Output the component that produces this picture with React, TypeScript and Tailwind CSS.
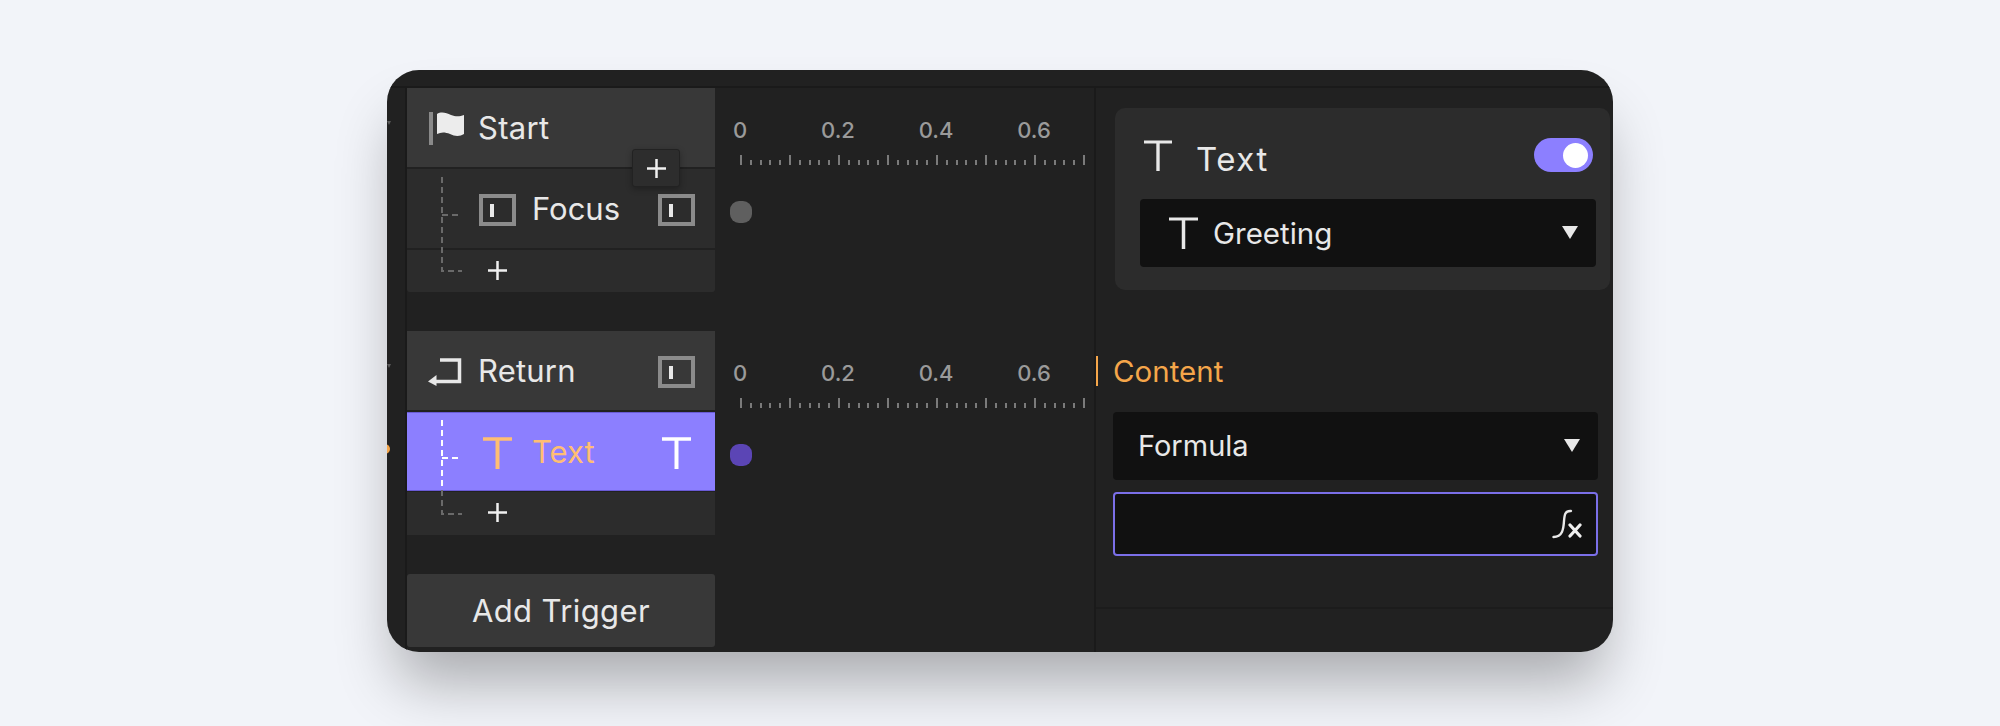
import React from 'react';

const FONT = "font-['Inter','Liberation_Sans',sans-serif]";

const FlagIcon = () => (
  <svg width="36" height="34" viewBox="0 0 36 34" className="shrink-0">
    <rect x="0" y="0" width="4" height="33" fill="#8a8a8a" />
    <path d="M8 2 C12 -0.5 17 0.5 22 3 C27 5 31 4.5 35 3 L35 22 C31 24.5 26 24.5 21 22 C16 20 12 20 8 22 Z" fill="#ececec" />
  </svg>
);

const ReturnIcon = () => (
  <svg width="34" height="28" viewBox="0 0 34 28" className="shrink-0">
    <path d="M12 2 H31.5 V23.5 H6" fill="none" stroke="#e8e8e8" strokeWidth="3.5" />
    <path d="M0 23.5 L8.5 17 V28 Z" fill="#e8e8e8" />
  </svg>
);

const FocusIcon = () => (
  <svg width="37" height="32" viewBox="0 0 37 32" className="shrink-0">
    <rect x="2" y="2" width="33" height="28" fill="none" stroke="#8b8b8b" strokeWidth="4" />
    <rect x="11" y="10" width="4" height="13" fill="#e8e8e8" />
  </svg>
);

const TIcon = ({ color = '#e8e8e8', w = 29, h = 32, bold }: { color?: string; w?: number; h?: number; bold?: boolean }) => (
  <svg width={w} height={h} viewBox="0 0 29 32" className="shrink-0">
    <path d="M0 2 H29" fill="none" stroke={color} strokeWidth={bold ? 3.5 : 3} />
    <path d="M14.5 2 V32" fill="none" stroke={color} strokeWidth={bold ? 4 : 3.5} />
  </svg>
);

const Plus = ({ size = 19 }: { size?: number }) => (
  <svg width={size} height={size} viewBox="0 0 19 19" className="shrink-0">
    <path d="M0 9.5 H19 M9.5 0 V19" fill="none" stroke="#f0f0f0" strokeWidth="2.5" />
  </svg>
);

const Caret = () => (
  <svg width="16" height="14" viewBox="0 0 16 14" className="shrink-0">
    <path d="M0 0 H16 L8 13 Z" fill="#e8e8e8" />
  </svg>
);

const FxIcon = () => (
  <svg width="30" height="30" viewBox="0 0 30 30" className="shrink-0">
    <path d="M19 2 C13 1.5 12.5 6 12 12 C11.5 20 10.5 28 1.5 28" fill="none" stroke="#e8e8e8" strokeWidth="2.4" strokeLinecap="round" />
    <path d="M18 16 L28 27 M28 16 L18 27" fill="none" stroke="#f0f0f0" strokeWidth="3.2" strokeLinecap="round" />
  </svg>
);

// dashed tree lines beside the child rows
const Tree = ({ active }: { active?: boolean }) => (
  <svg width="24" height="96" viewBox="0 0 24 96" className="absolute top-[89px] left-[33px]">
    <path d="M2 0 V67 M2 38 H22" fill="none" stroke={active ? '#ffffff' : '#6a6a6a'} strokeWidth="2" strokeDasharray="6 4" />
    <path d="M2 70 V94 H22" fill="none" stroke="#6a6a6a" strokeWidth="2" strokeDasharray="6 4" />
  </svg>
);

const EdgeMark = ({ className }: { className: string }) => (
  <svg width="4" height="4" viewBox="0 0 4 4" className={`absolute left-0 ${className}`}>
    <path d="M0 0 H4 L2 4 Z" fill="#5a5a5a" />
  </svg>
);

const Ruler = ({ dot }: { dot: string }) => (
  <div className="h-[243px] shrink-0 pt-[28px]">
    <div className="flex gap-[48px]">
      {['0', '0.2', '0.4', '0.6'].map(t => (
        <span key={t} className="w-[50px] text-center text-[22px] leading-[28px] font-medium text-[#9a9a9a]">{t}</span>
      ))}
    </div>
    <div className="mt-[11px] flex h-[10px] items-end gap-[7.8px] pl-[25px]">
      {Array.from({ length: 36 }).map((_, i) => (
        <div key={i} className={`w-[2px] bg-[#7a7a7a] ${i % 5 === 0 ? 'h-[10px]' : 'h-[5px]'}`}></div>
      ))}
    </div>
    <div className={`mt-[36px] ml-[15px] size-[22px] rounded-[9px] ${dot}`}></div>
  </div>
);

const Select = ({ children }: { children: React.ReactNode }) => (
  <div className="flex h-[68px] items-center justify-between rounded-[4px] bg-[#111111] pr-[18px]">
    {children}
    <Caret />
  </div>
);

export default function App() {
  return (
    <div className={`h-[726px] w-full bg-[#f2f4f9] pt-[70px] ${FONT}`}>
      <div className="ml-[387px] flex h-[582px] w-[1226px] flex-col overflow-hidden rounded-[32px] bg-[#212121] text-[#e8e8e8] shadow-[0_40px_60px_-10px_rgba(0,0,0,0.3)]">
        <div className="h-[18px] shrink-0 border-b-2 border-[#1a1a1a]"></div>
        <div className="flex min-h-0 flex-1">
          {/* Left edge strip */}
          <div className="relative w-[20px] shrink-0 border-r-2 border-[#1a1a1a]">
            <EdgeMark className="top-[33px]" />
            <EdgeMark className="top-[276px]" />
            <div className="absolute top-[356px] -left-[7px] size-[10px] rounded-full bg-[#f5a64a]"></div>
          </div>

          {/* Trigger rows */}
          <div className="flex w-[308px] shrink-0 flex-col">
            <div className="relative">
              <div className="flex h-[79px] items-center gap-[13px] bg-[#383838] pt-[2px] pl-[22px] text-[31px] tracking-[0.3px]">
                <FlagIcon />
                <span>Start</span>
              </div>
              <div className="mt-[2px] flex h-[79px] items-center justify-between bg-[#2c2c2c] pt-[2px] pr-[20px] pl-[72px] text-[31px]">
                <div className="flex items-center gap-[16px]">
                  <FocusIcon />
                  <span>Focus</span>
                </div>
                <FocusIcon />
              </div>
              <div className="mt-[2px] flex h-[42px] items-center rounded-b-[3px] bg-[#2c2c2c] pb-[2px] pl-[81px]">
                <Plus />
              </div>
              <Tree />
              <div className="absolute top-[61px] left-[225px] flex h-[38px] w-[48px] items-center justify-center rounded-[3px] border border-[#222222] bg-[#2d2d2d] shadow-[0_2px_6px_rgba(0,0,0,0.3)]">
                <Plus />
              </div>
            </div>

            <div className="relative mt-[39px]">
              <div className="flex h-[79px] items-center justify-between bg-[#383838] pt-[2px] pr-[20px] pl-[21px] text-[31px] tracking-[0.2px]">
                <div className="flex items-center gap-[16px]">
                  <ReturnIcon />
                  <span>Return</span>
                </div>
                <FocusIcon />
              </div>
              <div className="mt-[2px] flex h-[79px] items-center justify-between border-y border-[#6a5bd6] bg-[#8c7fff] pt-[2px] pr-[24px] pl-[76px] text-[31px] text-[#ffbe73]">
                <div className="flex items-center gap-[20px]">
                  <TIcon color="#ffbe73" bold />
                  <span>Text</span>
                </div>
                <TIcon color="#ffffff" bold />
              </div>
              <div className="mt-px flex h-[43px] items-center bg-[#2c2c2c] pb-[2px] pl-[81px]">
                <Plus />
              </div>
              <Tree active />
            </div>

            <div className="mt-[39px] flex h-[73px] shrink-0 items-center justify-center rounded-[3px] bg-[#383838] pt-[2px] text-[31px] tracking-[0.4px]">
              Add Trigger
            </div>
          </div>

          {/* Timeline */}
          <div className="flex w-[379px] shrink-0 flex-col">
            <Ruler dot="bg-[#5f5f5f]" />
            <Ruler dot="bg-[#5b45b5]" />
          </div>

          {/* Properties panel */}
          <div className="flex flex-1 flex-col border-l-2 border-[#1a1a1a]">
            <div className="pt-[20px] pl-[19px]">
              <div className="h-[182px] w-[495px] rounded-[10px] bg-[#2c2c2c] pt-[30px]">
                <div className="flex h-[34px] items-center justify-between pr-[17px] pl-[29px]">
                  <div className="flex items-center gap-[24px]">
                    <TIcon w={28} h={31} />
                    <span className="pt-[10px] text-[33px] tracking-[1.5px]">Text</span>
                  </div>
                  <div className="flex h-[34px] w-[59px] items-center justify-end rounded-full bg-[#8c7fff] pr-[5px]">
                    <div className="size-[25px] rounded-full bg-white"></div>
                  </div>
                </div>
                <div className="mt-[27px] ml-[25px] w-[456px]">
                  <Select>
                    <div className="flex items-center gap-[15px] pl-[29px] text-[29.5px]">
                      <TIcon />
                      <span>Greeting</span>
                    </div>
                  </Select>
                </div>
              </div>
            </div>

            <div className="mt-[66px] flex h-[30px] items-center">
              <div className="h-[30px] w-[2px] bg-[#f5a64a]"></div>
              <span className="ml-[15px] text-[29.5px] text-[#f5a64a]">Content</span>
            </div>

            <div className="mt-[26px] ml-[17px] w-[485px]">
              <Select>
                <span className="pl-[25px] text-[29px]">Formula</span>
              </Select>
              <div className="mt-[12px] flex h-[64px] items-center justify-end rounded-[4px] border-[2.5px] border-[#7b6fe8] bg-[#111111] pr-[14px]">
                <FxIcon />
              </div>
            </div>

            <div className="flex-1"></div>
            <div className="h-[45px] border-t-2 border-[#1c1c1c]"></div>
          </div>
        </div>
      </div>
    </div>
  );
}
